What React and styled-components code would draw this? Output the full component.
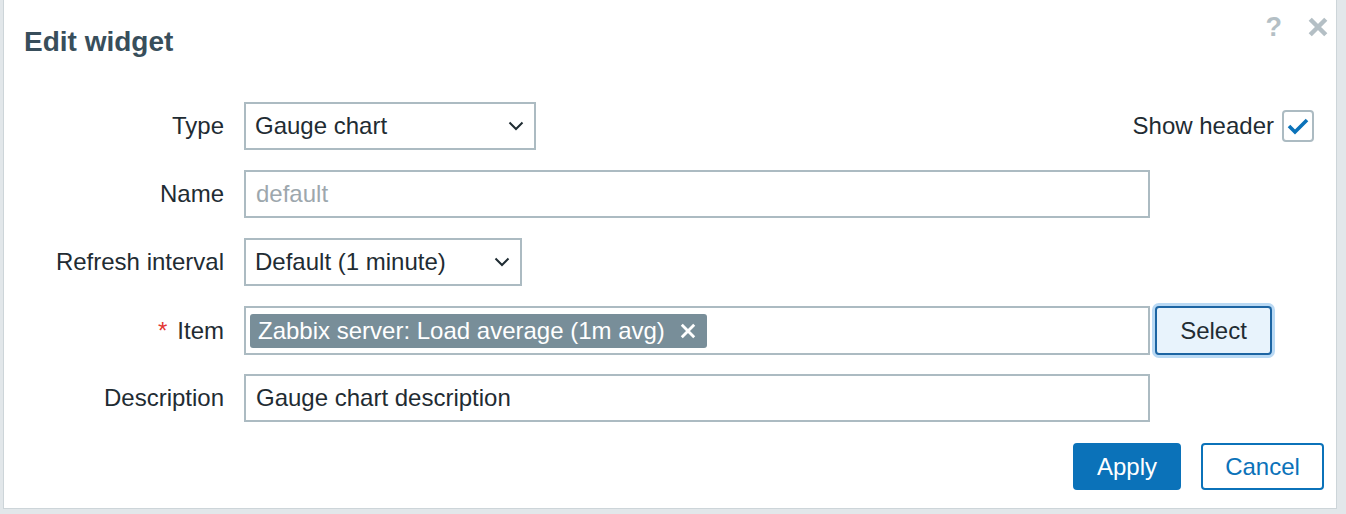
import React, { useState } from 'react'
import styled, { createGlobalStyle } from 'styled-components'

const GlobalStyle = createGlobalStyle`
  html, body {
    margin: 0;
    padding: 0;
    background: #e2e7ea;
  }
  body {
    font-family: "Liberation Sans", Arial, sans-serif;
    color: #1f2c33;
  }
  * { box-sizing: border-box; }
`

const Page = styled.div`
  height: 514px;
  padding-left: 3px;
  overflow: hidden;
`

const Dialog = styled.div`
  width: 1334px;
  height: 509px;
  background: #fff;
  border: 1px solid #cdd5d9;
  border-top: none;
  display: flex;
  flex-direction: column;
`

const Header = styled.div`
  height: 84px;
  display: flex;
  align-items: center;
  justify-content: space-between;
  padding: 0 8px 0 20px;
`

const Title = styled.h1`
  margin: 0;
  font-size: 28px;
  font-weight: bold;
  color: #384e5b;
`

const Tools = styled.div`
  align-self: flex-start;
  margin-top: 15px;
  display: flex;
  align-items: center;
  gap: 26px;
`

const HelpGlyph = styled.span`
  font-size: 27px;
  font-weight: bold;
  color: #b4bfc5;
  line-height: 24px;
`

const Form = styled.div`
  display: flex;
  flex-direction: column;
  gap: 20px;
  padding: 18px 22px 0 20px;
`

const Row = styled.div`
  display: grid;
  grid-template-columns: 200px 1fr;
  column-gap: 20px;
  align-items: center;
  height: 48px;
`

const Label = styled.label`
  text-align: right;
  font-size: 24px;
  color: #1f2c33;
`

const Required = styled.span`
  color: #e33734;
  margin-right: 10px;
`

const Field = styled.div`
  display: flex;
  align-items: center;
  gap: 5px;
  height: 100%;
`

const Box = styled.div`
  width: ${p => p.$w}px;
  height: 100%;
  border: 2px solid #acbbc2;
  background: #fff;
  display: flex;
  align-items: center;
  padding: 0 ${p => p.$pr || 10}px 0 ${p => p.$pl || 9}px;
  font-size: 24px;
  color: ${p => (p.$muted ? '#9da7ad' : '#1f2c33')};
  justify-content: ${p => (p.$select ? 'space-between' : 'flex-start')};
`

const Chip = styled.span`
  display: inline-flex;
  align-items: center;
  height: 34px;
  background: #788e99;
  color: #fff;
  border-radius: 3px;
  font-size: 24px;
  padding: 0 11px 0 8px;
  gap: 15px;
`

const HeaderToggle = styled.label`
  margin-left: auto;
  display: flex;
  align-items: center;
  gap: 8px;
  font-size: 24px;
  color: #1f2c33;
`

const Check = styled.span`
  width: 32px;
  height: 32px;
  border: 2px solid #acbbc2;
  border-radius: 4px;
  display: flex;
  align-items: center;
  justify-content: center;
`

const SelectButton = styled.button`
  width: 117px;
  height: 49px;
  font-family: inherit;
  font-size: 24px;
  color: #1f2c33;
  background: #e8f3fc;
  border: 2px solid #1d65a3;
  border-radius: 4px;
  box-shadow: 0 0 0 3px #b9d9f4;
`

const Footer = styled.div`
  display: flex;
  justify-content: flex-end;
  gap: 20px;
  padding: 21px 12px 0 0;
`

const Button = styled.button`
  height: 47px;
  min-width: ${p => p.$w}px;
  font-family: inherit;
  font-size: 24px;
  border-radius: 4px;
  border: 2px solid #0b72b9;
  background: ${p => (p.$primary ? '#0b72b9' : '#fff')};
  color: ${p => (p.$primary ? '#fff' : '#0b72b9')};
`

const Chevron = () => (
  <svg width="16" height="10" viewBox="0 0 16 10">
    <path d="M1.5 1.5 L8 8 L14.5 1.5" fill="none" stroke="#1f2c33" strokeWidth="2" />
  </svg>
)

const CloseIcon = ({ size = 18, color = '#b4bfc5', w = 4 }) => (
  <svg width={size} height={size} viewBox="0 0 18 18">
    <path d="M2 2 L16 16 M16 2 L2 16" stroke={color} strokeWidth={w} />
  </svg>
)

export default function App() {
  const [showHeader, setShowHeader] = useState(true)

  return (
    <Page>
      <GlobalStyle />
      <Dialog>
        <Header>
          <Title>Edit widget</Title>
          <Tools>
            <HelpGlyph>?</HelpGlyph>
            <CloseIcon size={20} w={4} />
          </Tools>
        </Header>

        <Form>
          <Row>
            <Label>Type</Label>
            <Field>
              <Box $w={292} $select>
                Gauge chart
                <Chevron />
              </Box>
              <HeaderToggle onClick={() => setShowHeader(!showHeader)}>
                Show header
                <Check>
                  {showHeader && (
                    <svg width="22" height="18" viewBox="0 0 22 18">
                      <path d="M2 9 L8 15 L20 3" fill="none" stroke="#0b72b9" strokeWidth="3.6" />
                    </svg>
                  )}
                </Check>
              </HeaderToggle>
            </Field>
          </Row>

          <Row>
            <Label>Name</Label>
            <Field>
              <Box $w={906} $pl={10} $muted>default</Box>
            </Field>
          </Row>

          <Row>
            <Label>Refresh interval</Label>
            <Field>
              <Box $w={278} $select>
                Default (1 minute)
                <Chevron />
              </Box>
            </Field>
          </Row>

          <Row>
            <Label><Required>*</Required>Item</Label>
            <Field>
              <Box $w={906} $pl={4}>
                <Chip>
                  Zabbix server: Load average (1m avg)
                  <CloseIcon size={16} color="#fff" w={3.2} />
                </Chip>
              </Box>
              <SelectButton>Select</SelectButton>
            </Field>
          </Row>

          <Row>
            <Label>Description</Label>
            <Field>
              <Box $w={906} $pl={10}>Gauge chart description</Box>
            </Field>
          </Row>
        </Form>

        <Footer>
          <Button $primary $w={108}>Apply</Button>
          <Button $w={123}>Cancel</Button>
        </Footer>
      </Dialog>
    </Page>
  )
}
